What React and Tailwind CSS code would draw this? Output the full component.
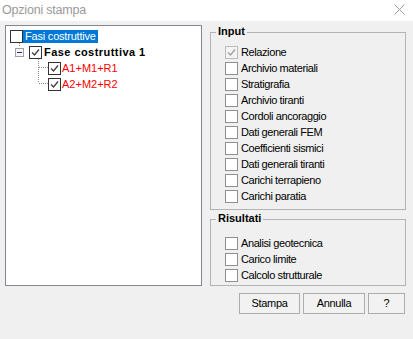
import React from 'react';

const inputItems = [
  { label: 'Relazione', checked: true, disabled: true },
  { label: 'Archivio materiali' },
  { label: 'Stratigrafia' },
  { label: 'Archivio tiranti' },
  { label: 'Cordoli ancoraggio' },
  { label: 'Dati generali FEM' },
  { label: 'Coefficienti sismici' },
  { label: 'Dati generali tiranti' },
  { label: 'Carichi terrapieno' },
  { label: 'Carichi paratia' },
];

const resultItems = [
  { label: 'Analisi geotecnica' },
  { label: 'Carico limite' },
  { label: 'Calcolo strutturale' },
];

const Check = ({ color }) => (
  <svg width="11" height="11" viewBox="0 0 11 11">
    <polyline points="2,5.5 4.5,8 9,2.5" fill="none" stroke={color} strokeWidth="1.4" />
  </svg>
);

const TreeBox = ({ checked }) => (
  <span className="flex h-[13px] w-[13px] shrink-0 items-center justify-center border border-[#333333] bg-white">
    {checked && <Check color="#444444" />}
  </span>
);

const OptionRow = ({ item }) => (
  <div className="flex h-[16px] items-center">
    <span
      className={`flex h-[13px] w-[13px] shrink-0 items-center justify-center border ${
        item.disabled ? 'border-[#bcbcbc] bg-[#f4f4f4]' : 'border-[#8f8f8f] bg-white'
      }`}
    >
      {item.checked && <Check color="#a0a0a0" />}
    </span>
    <span className="ml-[3px] tracking-[-0.4px] text-black">{item.label}</span>
  </div>
);

const Group = ({ title, items, className, padTop }) => (
  <div className={`relative border border-[#b4b4b4] pl-[14px] ${className}`}>
    <span className="absolute left-[5px] top-[-8px] bg-[#f0f0f0] px-[2px] font-bold leading-[13px]">
      {title}
    </span>
    <div className={`flex flex-col ${padTop}`}>
      {items.map((item) => (
        <OptionRow key={item.label} item={item} />
      ))}
    </div>
  </div>
);

const Button = ({ children, width }) => (
  <button className={`h-[21px] ${width} border border-[#adadad] bg-[#f2f2f2] text-center tracking-[-0.3px] text-black`}>
    {children}
  </button>
);

export default function App() {
  return (
    <div
      className="h-[339px] w-[413px] overflow-hidden bg-[#f0f0f0] text-[11px] leading-[13px] text-black"
      style={{ fontFamily: '"Liberation Sans", Arial, sans-serif' }}
    >
      {/* Title bar */}
      <div className="flex h-[21px] items-center justify-between bg-white pl-[2px] pr-[8px]">
        <span className="text-[12.5px] tracking-[-0.2px] text-[#999999]">Opzioni stampa</span>
        <svg width="11" height="11" viewBox="0 0 11 11" className="mb-[3px]">
          <path d="M0.5 0.5 L10.5 10.5 M10.5 0.5 L0.5 10.5" stroke="#9a9a9a" strokeWidth="1" />
        </svg>
      </div>

      <div className="flex pl-[5px] pt-[4px]">
        {/* Tree */}
        <div className="relative h-[261px] w-[197px] border border-[#828790] bg-white pt-[2px]">
          <svg className="absolute left-0 top-0" width="60" height="70">
            <g stroke="#8a8a8a" strokeWidth="1" strokeDasharray="1 1">
              <line x1="13.5" y1="15" x2="13.5" y2="21" />
              <line x1="32.5" y1="31" x2="32.5" y2="57" />
              <line x1="33" y1="41.5" x2="42" y2="41.5" />
              <line x1="33" y1="57.5" x2="42" y2="57.5" />
            </g>
          </svg>

          <div className="relative flex h-[16px] items-center pl-[4px]">
            <TreeBox />
            <span className="flex h-[13px] items-center bg-[#0078d7] px-[2px] tracking-[-0.2px] text-white">
              Fasi costruttive
            </span>
          </div>

          <div className="relative flex h-[16px] items-center pl-[9px]">
            <span className="mr-[5px] flex h-[9px] w-[9px] shrink-0 items-center justify-center border border-[#a0a0a0] bg-[#f6f6f6]">
              <span className="h-[1px] w-[5px] bg-[#2b2b6b]" />
            </span>
            <TreeBox checked />
            <span className="px-[2px] font-bold tracking-[0.45px]">Fase costruttiva 1</span>
          </div>

          <div className="relative flex h-[16px] items-center pl-[42px]">
            <TreeBox checked />
            <span className="px-[1px] text-[#ff0000]">A1+M1+R1</span>
          </div>

          <div className="relative flex h-[16px] items-center pl-[42px]">
            <TreeBox checked />
            <span className="px-[1px] text-[#ff0000]">A2+M2+R2</span>
          </div>
        </div>

        {/* Options */}
        <div className="ml-[8px] flex w-[196px] flex-col pt-[7px]">
          <Group title="Input" items={inputItems} className="h-[178px]" padTop="pt-[11px]" />
          <Group title="Risultati" items={resultItems} className="mt-[9px] h-[67px]" padTop="pt-[15px]" />

          <div className="mt-[7px] flex justify-end gap-[3px] pr-[1px]">
            <Button width="w-[61px]">Stampa</Button>
            <Button width="w-[62px]">Annulla</Button>
            <Button width="w-[37px]">?</Button>
          </div>
        </div>
      </div>
    </div>
  );
}
